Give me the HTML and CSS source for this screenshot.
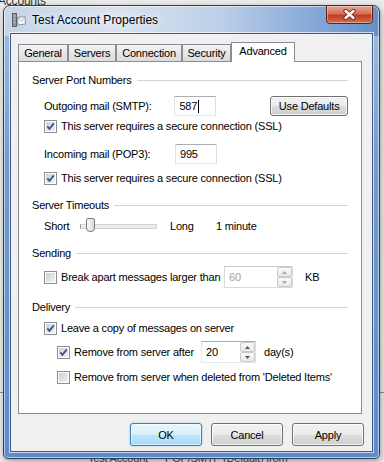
FILE: index.html
```html
<!DOCTYPE html>
<html lang="en">
<head>
    <meta charset="UTF-8">
    <title>Test Account Properties</title>
    <link rel="stylesheet" href="styles.css">
</head>
<body>
    <!-- bits of the window behind the dialog -->
    <div class="behind-title">Accounts</div>
    <div class="behind-line"></div>
    <div class="behind-row">Test Account &nbsp;&nbsp;&nbsp;&nbsp; POP/SMTP (Default) from</div>

    <div class="window">
        <div class="titlebar">
            <svg class="app-icon" width="14" height="14" viewBox="0 0 14 14">
                <rect x="0.5" y="0.5" width="4" height="13" fill="#8a919b" stroke="#5d636c"/>
                <path d="M1.5 3h2M1.5 6h2M1.5 9h2" stroke="#d5d9de"/>
                <path d="M5.5 4.5 L13 3.5 L13.5 11 L6 12 Z" fill="#f7f7f7" stroke="#8d939b"/>
                <path d="M6 5 L9.5 8 L13 4" fill="none" stroke="#b4b9bf"/>
            </svg>
            <span class="title">Test Account Properties</span>
            <button class="close">
                <svg width="13" height="11" viewBox="0 0 13 11">
                    <path d="M2.5 2 L10.5 9 M10.5 2 L2.5 9" stroke="#6b2418" stroke-width="4.2" stroke-linecap="round"/>
                    <path d="M2.5 2 L10.5 9 M10.5 2 L2.5 9" stroke="#fff" stroke-width="2.4" stroke-linecap="round"/>
                </svg>
            </button>
        </div>

        <div class="client">
            <div class="tabs">
                <div class="tab tab-general">General</div>
                <div class="tab tab-servers">Servers</div>
                <div class="tab tab-connection">Connection</div>
                <div class="tab tab-security">Security</div>
                <div class="tab tab-advanced active">Advanced</div>
            </div>

            <div class="panel">
                <div class="group">
                    <div class="group-title">Server Port Numbers</div>
                    <div class="row tall mt7">
                        <span class="field-label">Outgoing mail (SMTP):</span>
                        <div class="field port">587<span class="caret"></span></div>
                        <button class="btn small">Use Defaults</button>
                    </div>
                    <div class="row mt2">
                        <span class="check checked"><svg width="11" height="11" viewBox="0 0 11 11"><path d="M2.3 5.3 L4.5 7.8 L8.8 2.4" fill="none" stroke="#3b5486" stroke-width="1.8"/></svg></span>
                        <span>This server requires a secure connection (SSL)</span>
                    </div>
                    <div class="row tall mt10">
                        <span class="field-label">Incoming mail (POP3):</span>
                        <div class="field port">995</div>
                    </div>
                    <div class="row mt6">
                        <span class="check checked"><svg width="11" height="11" viewBox="0 0 11 11"><path d="M2.3 5.3 L4.5 7.8 L8.8 2.4" fill="none" stroke="#3b5486" stroke-width="1.8"/></svg></span>
                        <span>This server requires a secure connection (SSL)</span>
                    </div>
                </div>

                <div class="group">
                    <div class="group-title">Server Timeouts</div>
                    <div class="row mt4">
                        <span class="short">Short</span>
                        <div class="slider"><span class="thumb"></span></div>
                        <span class="long">Long</span>
                        <span>1 minute</span>
                    </div>
                </div>

                <div class="group">
                    <div class="group-title">Sending</div>
                    <div class="row taller mt4">
                        <span class="check"></span>
                        <span class="break-label">Break apart messages larger than</span>
                        <div class="field spin-field size disabled">
                            <span>60</span>
                            <span class="spin">
                                <span class="spin-btn"><svg width="5" height="3" viewBox="0 0 5 3"><path d="M0 3 L2.5 0 L5 3Z" fill="#a8a8a8"/></svg></span>
                                <span class="spin-btn"><svg width="5" height="3" viewBox="0 0 5 3"><path d="M0 0 L2.5 3 L5 0Z" fill="#a8a8a8"/></svg></span>
                            </span>
                        </div>
                        <span class="unit-kb">KB</span>
                    </div>
                </div>

                <div class="group">
                    <div class="group-title">Delivery</div>
                    <div class="row mt4">
                        <span class="check checked"><svg width="11" height="11" viewBox="0 0 11 11"><path d="M2.3 5.3 L4.5 7.8 L8.8 2.4" fill="none" stroke="#3b5486" stroke-width="1.8"/></svg></span>
                        <span>Leave a copy of messages on server</span>
                    </div>
                    <div class="row sub taller mt5">
                        <span class="check checked"><svg width="11" height="11" viewBox="0 0 11 11"><path d="M2.3 5.3 L4.5 7.8 L8.8 2.4" fill="none" stroke="#3b5486" stroke-width="1.8"/></svg></span>
                        <span class="days-label">Remove from server after</span>
                        <div class="field spin-field days">
                            <span>20</span>
                            <span class="spin">
                                <span class="spin-btn"><svg width="5" height="3" viewBox="0 0 5 3"><path d="M0 3 L2.5 0 L5 3Z" fill="#4a5a78"/></svg></span>
                                <span class="spin-btn"><svg width="5" height="3" viewBox="0 0 5 3"><path d="M0 0 L2.5 3 L5 0Z" fill="#4a5a78"/></svg></span>
                            </span>
                        </div>
                        <span class="unit-days">day(s)</span>
                    </div>
                    <div class="row sub mt6">
                        <span class="check"></span>
                        <span>Remove from server when deleted from 'Deleted Items'</span>
                    </div>
                </div>
            </div>

            <div class="actions">
                <button class="btn default">OK</button>
                <button class="btn">Cancel</button>
                <button class="btn">Apply</button>
            </div>
        </div>
    </div>
</body>
</html>
```

FILE: styles.css
```css
* {
    box-sizing: border-box;
}

body {
    margin: 0;
    width: 384px;
    height: 462px;
    overflow: hidden;
    position: relative;
    background: #ececec;
    font-family: "Liberation Sans", Arial, sans-serif;
    font-size: 11px;
    letter-spacing: -0.2px;
    color: #000;
}

/* window underneath */
.behind-title {
    position: absolute;
    left: -2px;
    top: -6px;
    font-size: 12px;
    color: #333;
}

.behind-line {
    position: absolute;
    left: 0;
    right: 0;
    top: 392px;
    height: 1px;
    background: #8d8d8d;
}

.behind-row {
    position: absolute;
    left: 88px;
    top: 452px;
    color: #444;
}

/* dialog frame */
.window {
    position: relative;
    margin: 5px 0 0 3px;
    width: 377px;
    height: 454px;
    border: 1px solid #2d3e58;
    border-radius: 7px 7px 5px 5px;
    background:
        linear-gradient(to right, #c6d4e6 0%, #d9e3f0 30%, #bccfe7 58%, #86a9d8 82%, #6490cb 100%) top / 100% 30px no-repeat,
        linear-gradient(to bottom, #a6bfdf, #729bd0 35%, #5f8bc8);
    box-shadow: inset 0 0 0 1px rgba(255, 255, 255, 0.55), 1px 2px 6px rgba(0, 0, 0, 0.35);
}

.titlebar {
    display: flex;
    align-items: center;
    height: 27px;
    padding-left: 8px;
}

.app-icon {
    flex: none;
    margin-top: 1px;
}

.title {
    margin-left: 6px;
    font-size: 12px;
    letter-spacing: 0;
    text-shadow: 0 0 6px rgba(255, 255, 255, 0.95), 0 0 10px rgba(255, 255, 255, 0.8);
}

.close {
    align-self: flex-start;
    margin: -1px 6px 0 auto;
    width: 47px;
    height: 19px;
    padding: 0;
    display: flex;
    align-items: center;
    justify-content: center;
    border: 1px solid #5d2318;
    border-radius: 0 0 4px 4px;
    background: linear-gradient(#e8a493, #d56f57 45%, #c03b22 55%, #d4704f);
    box-shadow: inset 0 0 0 1px rgba(255, 255, 255, 0.35);
}

.client {
    margin: 0 6px;
    height: 419px;
    padding: 8px 0 0 7px;
    background: #f0f0f0;
    border: 1px solid #3d5b88;
    box-shadow: 0 0 0 1px rgba(255, 255, 255, 0.65);
}

/* tabs */
.tabs {
    display: flex;
    align-items: flex-end;
    height: 19px;
}

.tab {
    height: 17px;
    padding-top: 2px;
    text-align: center;
    border: 1px solid #898c95;
    border-bottom: none;
    background: linear-gradient(#f5f5f5, #e6e6e6 50%, #dcdcdc);
}

.tab-general { width: 50px; }
.tab-servers { width: 48px; }
.tab-connection { width: 66px; }
.tab-security { width: 49px; }
.tab-advanced { width: 64px; }

.tab.active {
    height: 20px;
    margin-bottom: -1px;
    padding-top: 2px;
    background: #fff;
    position: relative;
    z-index: 1;
}

.panel {
    width: 344px;
    height: 353px;
    padding: 9px 13px 0 13px;
    background: #fff;
    border: 1px solid #898c95;
}

/* groups */
.group + .group {
    margin-top: 10px;
}

.group-title {
    display: flex;
    align-items: center;
    height: 18px;
}

.group-title::after {
    content: "";
    flex: 1;
    height: 1px;
    margin-left: 5px;
    background: #d0d5dc;
}

.row {
    display: flex;
    align-items: center;
    height: 16px;
    margin-left: 12px;
    white-space: nowrap;
}

.row.tall { height: 20px; }
.row.taller { height: 22px; }
.row.sub { margin-left: 25px; }

.mt2 { margin-top: 2px; }
.mt4 { margin-top: 4px; }
.mt5 { margin-top: 5px; }
.mt6 { margin-top: 6px; }
.mt7 { margin-top: 7px; }
.mt10 { margin-top: 10px; }

.field-label {
    width: 131px;
}

.field {
    display: flex;
    align-items: center;
    height: 100%;
    padding: 0 4px;
    background: #fff;
    border: 1px solid #dbdfe6;
    border-top-color: #abadb3;
    border-left-color: #e2e3ea;
    border-bottom-color: #e3e9ef;
}

.field.port {
    width: 42px;
}

.caret {
    width: 1px;
    height: 13px;
    margin-left: 1px;
    background: #000;
}

.field.disabled {
    color: #a3a3a3;
    border-color: #dadada;
    border-top-color: #c8c8c8;
}

.spin-field {
    padding-right: 0;
}

.spin {
    margin-left: auto;
    display: flex;
    flex-direction: column;
    width: 15px;
    height: 100%;
}

.spin-btn {
    flex: 1;
    display: flex;
    align-items: center;
    justify-content: center;
    border: 1px solid #c9c9c9;
    border-radius: 2px;
    background: linear-gradient(#fafafa, #e8e8e8);
}

.field.size {
    width: 69px;
}

.field.days {
    width: 55px;
}

.break-label {
    width: 163px;
}

.days-label {
    width: 127px;
}

.unit-kb {
    margin-left: 12px;
}

.unit-days {
    margin-left: 8px;
}

/* checkboxes */
.check {
    flex: none;
    width: 13px;
    height: 13px;
    margin-right: 4px;
    border: 1px solid #8e8f8f;
    background: linear-gradient(135deg, #c9ced6, #f3f4f6);
    box-shadow: inset 0 0 0 1px #fff;
}

.check svg {
    display: block;
}

/* trackbar */
.short {
    width: 36px;
}

.slider {
    position: relative;
    width: 77px;
    height: 16px;
}

.slider::before {
    content: "";
    position: absolute;
    left: 0;
    right: 0;
    top: 6px;
    height: 3px;
    border: 1px solid #d2d2d2;
    border-left-color: #9a9a9a;
    background: #e9ecec;
}

.thumb {
    position: absolute;
    left: 6px;
    top: 0;
    width: 9px;
    height: 14px;
    border: 1px solid #7c7c7c;
    border-radius: 2px 2px 4px 4px;
    background: linear-gradient(to right, #f7f7f7, #dcdcdc);
}

.long {
    width: 46px;
    margin-left: 13px;
}

/* buttons */
.btn {
    width: 72px;
    height: 23px;
    padding: 0;
    font-family: inherit;
    font-size: 11px;
    letter-spacing: -0.2px;
    color: #000;
    border: 1px solid #707070;
    border-radius: 3px;
    background: linear-gradient(#f2f2f2, #ebebeb 50%, #dddddd 50%, #cfcfcf);
    box-shadow: inset 0 0 0 1px rgba(255, 255, 255, 0.75);
}

.btn.small {
    width: 78px;
    height: 20px;
    margin-left: 54px;
    margin-top: -1px;
}

.btn.default {
    border-color: #3c7fb1;
    background: linear-gradient(#eaf6fd, #d9f0fc 50%, #bee6fd 50%, #a7d9f5);
    box-shadow: inset 0 0 0 1px rgba(255, 255, 255, 0.6), 0 0 2px #7fc4ec;
}

.actions {
    display: flex;
    justify-content: flex-end;
    gap: 9px;
    margin-top: 9px;
    padding-right: 8px;
}
```
